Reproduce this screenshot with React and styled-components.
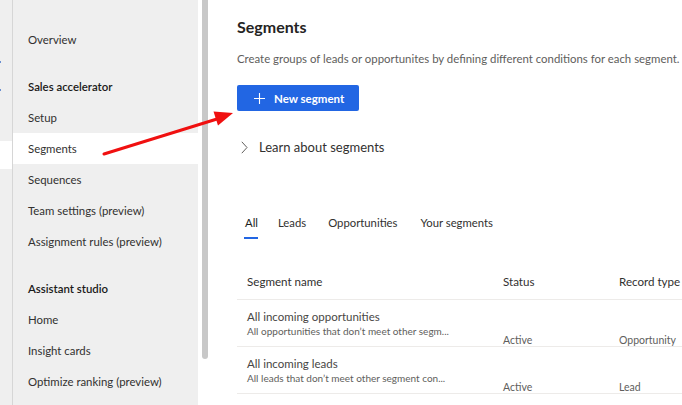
import React from "react";
import styled, { createGlobalStyle } from "styled-components";

const Global = createGlobalStyle`
  html, body { margin: 0; padding: 0; background: #ffffff; }
  body { font-family: "Segoe UI", Lato, "Open Sans", sans-serif; overflow: hidden; }
  * { box-sizing: border-box; }
`;

const Page = styled.div`
  position: relative;
  display: flex;
  width: 682px;
  height: 405px;
  overflow: hidden;
  background: #ffffff;
`;

const Rail = styled.div`
  width: 13px;
  flex: none;
  background: #efefef;
  border-right: 1px solid #d6d6d6;
  display: flex;
  flex-direction: column;
  padding-top: 61px;
`;

const RailMark = styled.div`
  width: 1px;
  height: 2px;
  background: #6a8fd0;
  margin-bottom: ${(p) => p.$gap}px;
`;

const RailActive = styled.div`
  width: 12px;
  height: 28px;
  background: #ffffff;
  margin-top: ${(p) => p.$top}px;
`;

const Nav = styled.nav`
  width: 185px;
  flex: none;
  background: #efefef;
  display: flex;
  flex-direction: column;
  padding-top: 24px;
`;

const NavItem = styled.div`
  height: 31px;
  display: flex;
  align-items: center;
  padding-left: 15px;
  font-size: 11.4px;
  color: ${(p) => (p.$heading ? "#1b1a19" : "#323130")};
  font-weight: ${(p) => (p.$heading ? 600 : 400)};
  background: ${(p) => (p.$active ? "#ffffff" : "transparent")};
  white-space: nowrap;
`;

const NavGap = styled.div`
  height: ${(p) => p.$h}px;
`;

const ScrollCol = styled.div`
  width: 10px;
  flex: none;
  padding-left: 4px;
`;

const Thumb = styled.div`
  width: 6px;
  height: 359px;
  background: #c8c8c8;
  border-radius: 0 0 3px 3px;
`;

const Main = styled.main`
  flex: 1;
  min-width: 0;
  padding: 16px 0 0 29px;
  display: flex;
  flex-direction: column;
`;

const Title = styled.h1`
  margin: 0;
  font-size: 16px;
  font-weight: 700;
  color: #252423;
  line-height: 22px;
`;

const Desc = styled.p`
  margin: 13px 0 0;
  font-size: 11.4px;
  color: #605e5c;
  line-height: 16px;
  white-space: nowrap;
`;

const PrimaryButton = styled.button`
  margin-top: 18px;
  align-self: flex-start;
  display: flex;
  align-items: center;
  gap: 9px;
  height: 26px;
  width: 122px;
  padding: 0 0 0 17px;
  border: none;
  border-radius: 2px;
  background: #2266e3;
  color: #ffffff;
  font-family: inherit;
  font-size: 11.5px;
  font-weight: 700;
`;

const Learn = styled.div`
  margin-top: 25px;
  display: flex;
  align-items: center;
  gap: 11px;
  padding-left: 4px;
  font-size: 13px;
  color: #323130;
  height: 22px;
`;

const Tabs = styled.div`
  margin-top: 57px;
  display: flex;
  padding-left: 8px;
`;

const Tab = styled.div`
  position: relative;
  margin-right: ${(p) => p.$mr}px;
  font-size: 11.3px;
  color: ${(p) => (p.$active ? "#201f1e" : "#323130")};
  line-height: 16px;
  padding-bottom: 8px;
  &::after {
    content: "";
    display: ${(p) => (p.$active ? "block" : "none")};
    position: absolute;
    left: -1px;
    bottom: 0;
    width: 14px;
    height: 2px;
    background: #2266e3;
  }
`;

const Table = styled.div`
  margin-top: 24px;
  display: flex;
  flex-direction: column;
`;

const Row = styled.div`
  display: grid;
  grid-template-columns: 256px 116px 1fr;
  border-bottom: 1px solid #edebe9;
  height: ${(p) => p.$h}px;
  padding-left: 10px;
  align-items: ${(p) => (p.$header ? "center" : "stretch")};
`;

const HeadCell = styled.div`
  font-size: 11.6px;
  color: #323130;
  white-space: nowrap;
`;

const NameCell = styled.div`
  display: flex;
  flex-direction: column;
  padding-top: 9px;
  white-space: nowrap;
`;

const NameTitle = styled.div`
  font-size: 11.5px;
  color: #484644;
  line-height: 16px;
`;

const NameSub = styled.div`
  font-size: 10px;
  color: #605e5c;
  line-height: 12px;
`;

const ValueCell = styled.div`
  align-self: end;
  padding-bottom: 0;
  font-size: 10.5px;
  color: #605e5c;
  line-height: 12px;
  white-space: nowrap;
`;

const Annotation = styled.svg`
  position: absolute;
  left: 0;
  top: 0;
  pointer-events: none;
`;

const navItems = [
  { label: "Overview" },
  { gap: 16 },
  { label: "Sales accelerator", heading: true },
  { label: "Setup" },
  { label: "Segments", active: true },
  { label: "Sequences" },
  { label: "Team settings (preview)" },
  { label: "Assignment rules (preview)" },
  { gap: 16 },
  { label: "Assistant studio", heading: true },
  { label: "Home" },
  { label: "Insight cards" },
  { label: "Optimize ranking (preview)" },
];

const rows = [
  {
    name: "All incoming opportunities",
    sub: "All opportunities that don’t meet other segm...",
    status: "Active",
    type: "Opportunity",
  },
  {
    name: "All incoming leads",
    sub: "All leads that don’t meet other segment con...",
    status: "Active",
    type: "Lead",
  },
];

export default function App() {
  return (
    <>
      <Global />
      <Page>
        <Rail>
          <RailMark $gap={26} />
          <RailMark $gap={0} />
          <RailActive $top={50} />
        </Rail>
        <Nav>
          {navItems.map((it, i) =>
            it.gap ? (
              <NavGap key={i} $h={it.gap} />
            ) : (
              <NavItem key={i} $heading={it.heading} $active={it.active}>
                {it.label}
              </NavItem>
            )
          )}
        </Nav>
        <ScrollCol>
          <Thumb />
        </ScrollCol>
        <Main>
          <Title>Segments</Title>
          <Desc>
            Create groups of leads or opportunites by defining different conditions for each segment.
          </Desc>
          <PrimaryButton>
            <svg width="11" height="11" viewBox="0 0 11 11">
              <path d="M5.5 0v11M0 5.5h11" stroke="#fff" strokeWidth="1.1" fill="none" />
            </svg>
            New segment
          </PrimaryButton>
          <Learn>
            <svg width="7" height="13" viewBox="0 0 7 13">
              <path d="M0.8 0.8L6 6.5L0.8 12.2" stroke="#605e5c" strokeWidth="1" fill="none" />
            </svg>
            Learn about segments
          </Learn>
          <Tabs>
            <Tab $active $mr={20}>All</Tab>
            <Tab $mr={22}>Leads</Tab>
            <Tab $mr={23}>Opportunities</Tab>
            <Tab $mr={0}>Your segments</Tab>
          </Tabs>
          <Table>
            <Row $header $h={37}>
              <HeadCell>Segment name</HeadCell>
              <HeadCell>Status</HeadCell>
              <HeadCell>Record type</HeadCell>
            </Row>
            {rows.map((r) => (
              <Row key={r.name} $h={47}>
                <NameCell>
                  <NameTitle>{r.name}</NameTitle>
                  <NameSub>{r.sub}</NameSub>
                </NameCell>
                <ValueCell>{r.status}</ValueCell>
                <ValueCell>{r.type}</ValueCell>
              </Row>
            ))}
          </Table>
        </Main>
        <Annotation width="682" height="405" viewBox="0 0 682 405">
          <line x1="104" y1="154" x2="217" y2="119" stroke="#f01010" strokeWidth="3" strokeLinecap="round" />
          <polygon points="233,113 213.5,111.5 218,125.5" fill="#f01010" />
        </Annotation>
      </Page>
    </>
  );
}
